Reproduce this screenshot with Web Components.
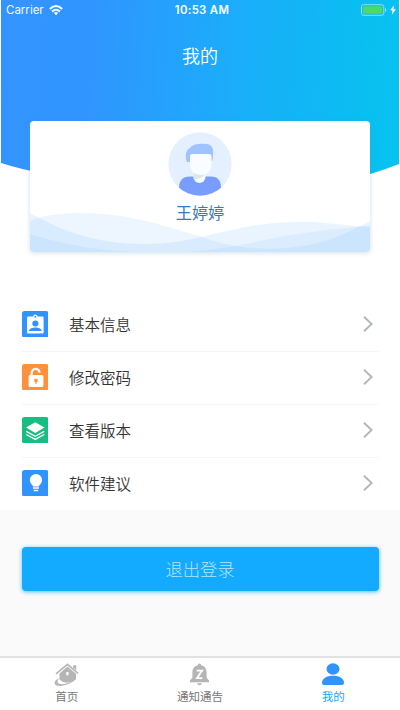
<!DOCTYPE html>
<html lang="zh-CN">
<head>
<meta charset="utf-8">
<title>我的</title>
<style>
html,body{margin:0;height:100%;background:#fff}
body{font-family:"Noto Sans CJK SC",sans-serif;overflow:hidden}
</style>
</head>
<body>
<profile-page></profile-page>
<script>
const define = (name, html) => customElements.define(name, class extends HTMLElement {
  connectedCallback() {
    if (this.shadowRoot) return;
    const t = document.createElement('template');
    t.innerHTML = typeof html === 'function' ? html(this) : html;
    this.attachShadow({mode: 'open'}).append(t.content.cloneNode(true));
  }
});

const icons = {
  info: `<rect width="26" height="26" rx="2.500" fill="#3193fd"/><path fill="#fff" fill-rule="evenodd" d="M6 5.500h5a2.100 2.100 0 0 1 4.200 0h5a1 1 0 0 1 1 1v14.500a1 1 0 0 1-1 1h-14.200a1 1 0 0 1-1-1v-14.500a1 1 0 0 1 1-1zM13.100 4.700a.9.9 0 1 0 0 1.800a.9.9 0 0 0 0-1.800zM13.100 9.200a3 3 0 1 0 0 6a3 3 0 0 0 0-6zM6.700 19.700h12.800c-.6-2.600-3.600-3.600-6.400-3.600s-5.800 1-6.400 3.600z"/>`,
  lock: `<rect width="26" height="26" rx="2.500" fill="#ff913b"/><path d="M9.500 11.500V9a3.900 3.900 0 0 1 7.800-.6" fill="none" stroke="#fff" stroke-width="2.100"/><path fill="#fff" fill-rule="evenodd" d="M8 10.800h11.500a1.500 1.500 0 0 1 1.500 1.500v8.700a1.500 1.500 0 0 1-1.500 1.500h-11.500a1.500 1.500 0 0 1-1.500-1.500v-8.700a1.500 1.500 0 0 1 1.500-1.500zM13.700 14.400a1.700 1.700 0 0 0-1.500 2.700l1 1v1.600h1v-1.600l1-1a1.700 1.700 0 0 0-1.500-2.700z"/>`,
  layers: `<rect width="26" height="26" rx="2.500" fill="#17bd83"/><path d="M4 10.400L13 5.200l9 5.200l-9 5.200z" fill="#fff"/><path d="M4.200 14.100L13 19l8.800-4.900M4.200 17.200L13 22l8.800-4.800" fill="none" stroke="#fff" stroke-width="1.300"/>`,
  bulb: `<rect width="26" height="26" rx="2.500" fill="#3193fd"/><path fill="#fff" d="M13.700 3.900a6 6 0 0 1 6 6c0 3.200-2.500 4.500-3.100 6.300h-5.800c-.6-1.800-3.100-3.100-3.100-6.300a6 6 0 0 1 6-6z"/><path d="M10.700 17.700h6M11.500 20.200h4.400" stroke="#fff" stroke-width="1.500"/>`,
};

define('status-bar', `<style>
:host{display:grid;grid-template-columns:1fr auto 1fr;align-items:center;height:20px;padding:0 4px 0 6px;color:#fff;font:11.500px/20px Inter,sans-serif}
.l,.r{display:flex;align-items:center}.l{gap:5px;opacity:.95}.r{justify-content:flex-end;gap:3px}
b{font-weight:600;font-size:11.300px;letter-spacing:.35px;padding-left:2px}
</style>
<div class="l"><span>Carrier</span><svg width="14" height="11" viewBox="0 0 14 11"><g fill="none" stroke="#fff" stroke-width="1.900"><path d="M.8 4Q7-1.800 13.200 4M3 6.500Q7 2.800 11 6.500"/></g><path fill="#fff" d="M4.700 7.800Q7 6 9.300 7.800L7 10.200z"/></svg></div>
<b>10:53 AM</b>
<div class="r"><svg width="26" height="12" viewBox="0 0 26 12"><rect x=".5" y=".7" width="22.300" height="10.600" rx="2" fill="none" stroke="#8fdcf7"/><rect x="2" y="2.200" width="19.200" height="7.600" rx=".7" fill="#4cd964"/><path d="M24 4q1.300.5 1.300 2T24 8z" fill="#8fdcf7"/></svg><svg width="6" height="10" viewBox="0 0 6 10"><path fill="#fff" d="M4 .2L.2 5.300h2.300L1.800 9.800L5.900 4.300H3.500z"/></svg></div>`);

define('page-header', `<style>
:host{display:block;height:177px;margin:0 1px;box-sizing:border-box;background:linear-gradient(93deg,#3494ff 0%,#3095ff 22%,#1aaefa 60%,#0abef1 90%,#06c4f0 100%);clip-path:path("M0 0H398V164Q380 171 350 180H90Q38 175 0 163Z")}
h1{margin:23px 0 0;text-align:center;color:#fff;font-weight:350;font-size:18px;line-height:24px}
status-bar{margin:0 -1px}
</style><status-bar></status-bar><h1><slot></slot></h1>`);

define('user-card', `<style>
:host{display:grid;height:131px;margin:-56px 30px 0;border-radius:4px;background:#fff;box-shadow:0 1px 5px rgba(90,150,190,.28);overflow:hidden;position:relative}
.waves,.body{grid-area:1/1}
.body{display:flex;flex-direction:column;align-items:center;padding-top:11px}
.name{font-size:16.200px;line-height:24px;color:#3878b8;margin-top:4px;font-weight:400}
svg{display:block}
</style>
<svg class="waves" width="340" height="131" viewBox="0 0 340 131">
<path fill="#3494ff" fill-opacity=".085" d="M0 100C14 94 31 92 52 92C102 92 139 107 170 115C216 134 280 131 320 110Q332 104 340 100V131H0z"/>
<path fill="#3494ff" fill-opacity=".1" d="M0 92C32 110 66 123 115 123C172 123 204 101 268 101C292 100 312 105 340 106V131H0z"/>
<path fill="#3494ff" fill-opacity=".075" d="M0 113C30 122 65 130 110 131H158C205 128 240 116 274 112C300 108 320 107 340 104V131H0z"/>
</svg>
<div class="body"><svg width="64" height="64" viewBox="0 0 64 64">
<defs><clipPath id="c"><circle cx="32" cy="32" r="31.700"/></clipPath></defs>
<g clip-path="url(#c)"><circle cx="32" cy="32" r="32" fill="#e4f0ff"/>
<path d="M11 64V56Q11 44.500 22 44.500H43Q53 44.500 53 56V64z" fill="#789dff"/>
<path d="M25.500 40h12v5a6 6 0 0 1-12 0z" fill="#f6fbff"/><path d="M25.500 40h12v2q-5 6-12 5z" fill="#dce7eb"/>
<path d="M19 30C17 26 17 18 22 16C25 11.500 33 11.500 38 12C44 12 46 17 45 23Q45 27 44 29z" fill="#a0c3ff"/>
<path d="M22 24Q22 22 25 22H41Q43.500 22 43.500 24V32Q43 43 32.500 43Q22 42 22 32z" fill="#fafdff"/></g></svg>
<div class="name"><slot></slot></div></div>`);

define('menu-row', el => `<style>
:host{display:flex;align-items:center;height:53px;margin:0 21px 0 21.500px;padding-bottom:2px;box-sizing:border-box;border-bottom:1px solid #f5f5f5;color:#333}
svg{display:block;flex:none}
.t{flex:1;margin:-1px 0 0 21px;font-size:15.500px;line-height:24px;font-weight:350}
.chev{margin-right:6px}
</style><svg width="26.500" height="26.500" viewBox="0 0 26 26">${icons[el.getAttribute('icon')]}</svg>
<span class="t"><slot></slot></span>
<svg class="chev" width="10" height="16" viewBox="0 0 10 16"><path d="M1 .8L8.600 8L1 15.200" fill="none" stroke="#b2b7bd" stroke-width="1.900"/></svg>`);

define('logout-button', `<style>
:host{display:block;padding:37px 21.500px 0}
button{display:block;width:100%;height:44px;padding:0;border:0;border-radius:4px;background:#12abff;color:#b9e6ff;font:300 17.300px/44px "Noto Sans CJK SC",sans-serif;box-shadow:0 1px 4px rgba(18,171,255,.75)}
</style><button><slot></slot></button>`);

const tabIcons = {
  home: `<path d="M2 11.800L13.500 2.300L24 11.300" fill="none" stroke="#b5b5b5" stroke-width="1.600"/><path d="M19.200 3.200h3V8.300L19.200 5.800z" fill="#b5b5b5"/><path fill="#b5b5b5" fill-rule="evenodd" d="M13.500 4.600L22 11.800V17Q18.500 20.300 12.500 20.700Q8.500 20.500 5.500 17.500V11.500zM12.300 10v3.200h2.200v-3.200z"/><path d="M5.500 15.800C2 17.500 0 20 .8 22C2.500 25.500 16 24.500 23 15.800C17.500 21 9 23.300 5.200 21.800C2.600 20.800 3.500 18 5.500 15.800z" fill="#b5b5b5"/>`,
  bell: `<path fill="#b5b5b5" d="M10.800 3.200a1.700 1.700 0 0 1 3.400 0C18 4.200 19.600 7 19.600 10.500V15.500L22 18.600V20.200H3V18.600L5.400 15.500V10.500C5.400 7 7 4.200 10.800 3.200zM10 21.300h5Q14.500 23.200 12.500 23.200T10 21.300z"/><path d="M9.700 8.600h5.400l-5.200 7.600h5.400" fill="none" stroke="#fff" stroke-width="1.800"/>`,
  user: `<ellipse cx="12" cy="7" rx="6.500" ry="5.800" fill="#3193fd"/><path d="M1 21C1 16.500 5.500 13.800 12 13.800S23 16.500 23 21Q23 23 21 23H3Q1 23 1 21z" fill="#3193fd"/>`,
};
define('tab-item', el => `<style>
:host{display:flex;flex-direction:column;align-items:center;color:#777;font-size:11.500px;line-height:18px;padding-top:4px}
:host([active]){color:#12abff}svg{display:block}span{margin-top:-1px}
</style><svg width="25" height="26" viewBox="0 0 25 26">${tabIcons[el.getAttribute('icon')]}</svg><span><slot></slot></span>`);

define('tab-bar', `<style>:host{display:grid;grid-template-columns:repeat(3,1fr);height:54.500px;box-sizing:border-box;background:#fff;border-top:2px solid #e2e2e2}</style><slot></slot>`);

define('profile-page', `<style>
:host{display:flex;flex-direction:column;height:710px;width:400px}
.menu{margin-top:47px;height:211px}
menu-row:last-child{border-bottom-color:transparent}
main{flex:1;background:#fafafa}
</style>
<page-header>我的</page-header>
<user-card>王婷婷</user-card>
<div class="menu"><menu-row icon="info">基本信息</menu-row><menu-row icon="lock">修改密码</menu-row><menu-row icon="layers">查看版本</menu-row><menu-row icon="bulb">软件建议</menu-row></div>
<main><logout-button>退出登录</logout-button></main>
<tab-bar><tab-item icon="home">首页</tab-item><tab-item icon="bell">通知通告</tab-item><tab-item icon="user" active>我的</tab-item></tab-bar>`);
</script>
</body>
</html>
